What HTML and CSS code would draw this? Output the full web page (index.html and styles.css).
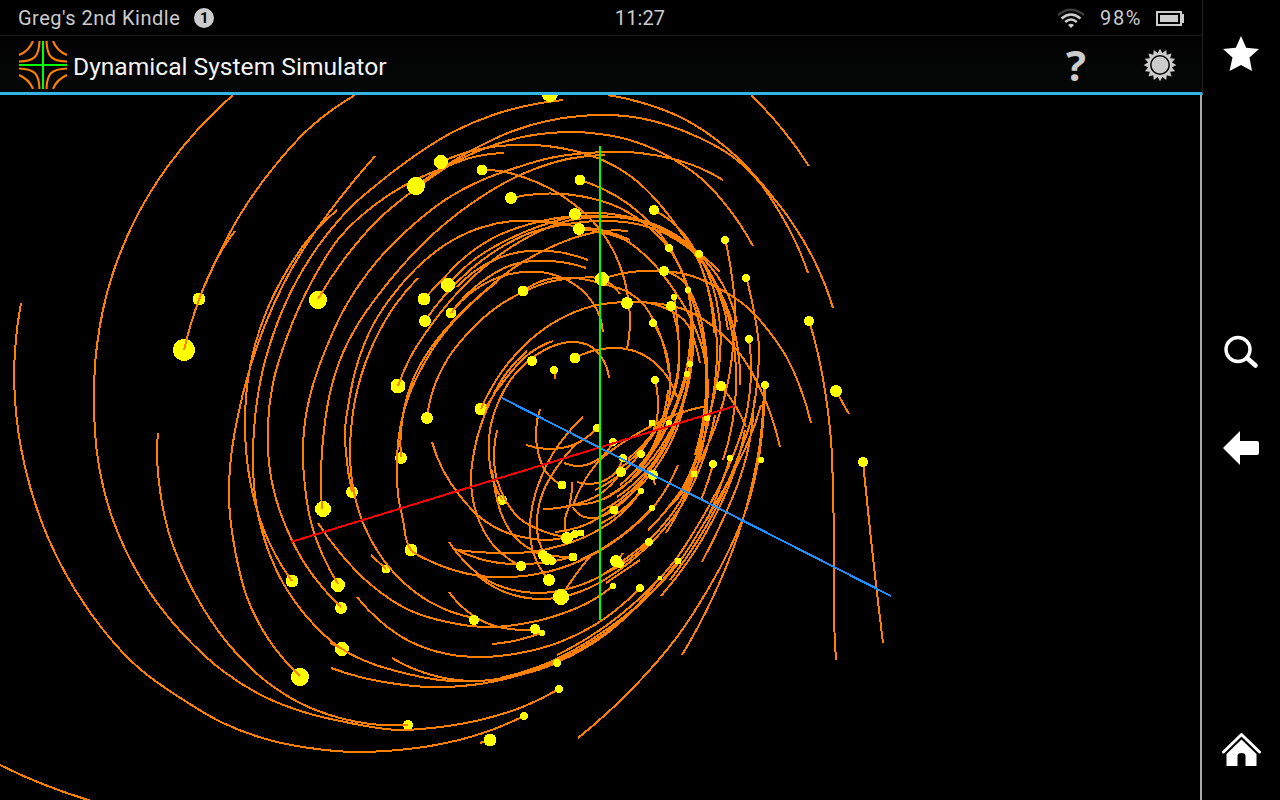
FILE: index.html
```html
<!DOCTYPE html>
<html lang="en">
<head>
<meta charset="utf-8">
<title>Dynamical System Simulator</title>
<link rel="stylesheet" href="styles.css">
</head>
<body>
<div class="device">
  <main class="screen">
    <div class="status">
      <div class="status-left"><span class="device-name">Greg's 2nd Kindle</span><span class="badge">1</span></div>
      <div class="clock">11:27</div>
      <div class="status-right">
        <svg class="wifi" width="28" height="21" viewBox="0 0 28 21" fill="none" stroke-width="2.6">
          <path d="M1 7Q14-3.500 27 7" stroke="#3c3c3c"/>
          <path d="M4.500 10.500Q14 2.500 23.500 10.500M8.200 14Q14 9 19.800 14" stroke="#ccc"/>
          <path d="M11 17Q14 14.300 17 17L14 20Z" fill="#ccc"/>
        </svg>
        <span class="percent">98%</span>
        <svg class="battery" width="28" height="15" viewBox="0 0 28 15"><path d="M1 1H25V14H1Z" fill="none" stroke="#ccc" stroke-width="2"/><path d="M4 4H22V11H4ZM26 3H28V12H26Z" fill="#ccc"/></svg>
      </div>
    </div>
    <header class="bar">
      <svg class="logo" width="48" height="48" viewBox="0 0 48 48" fill="none">
        <g stroke="#ff8000" stroke-width="2.100">
          <path d="M14 0Q10 10 0 14M20.500 0C20 15 16 20 0 20.500"/>
          <path d="M34 0Q38 10 48 14M27.500 0C28 15 32 20 48 20.500"/>
          <path d="M14 48Q10 38 0 34M20.500 48C20 33 16 28 0 27.500"/>
          <path d="M34 48Q38 38 48 34M27.500 48C28 33 32 28 48 27.500"/>
        </g>
        <path d="M24 0V48M0 24H48" stroke="#0f0" stroke-width="2"/>
      </svg>
      <h1 class="title">Dynamical System Simulator</h1>
      <span class="help">?</span>
      <svg class="gear" width="34" height="34" viewBox="-17 -17 34 34"><path id="teeth" fill="#ccc"/><circle r="9.200" fill="#ccc" stroke="#050505" stroke-width="1.500"/></svg>
    </header>
    <svg class="plot" width="1200" height="705" viewBox="0 95 1200 705">
      <g id="dots-under" class="dots"></g>
      <g id="trails" class="trails"></g>
      <g id="dots" class="dots"></g>
      <g class="axes"><path d="M291 542L735 406" stroke="#f00"/><path d="M502 398L891 596" stroke="#1e90ff"/><path d="M600 146V620" stroke="#0f0"/></g>
    </svg>
  </main>
  <nav class="side">
    <svg class="star" width="38" height="38" viewBox="0 0 38 38"><path d="M19 1L24.200 12.800L37 14L27.500 22.500L30 36L19 30L7.500 36L10.500 22.500L1 14L13.800 12.800Z" fill="#fff"/></svg>
    <svg class="search" width="36" height="34" viewBox="0 0 36 34" fill="none" stroke="#fff"><circle cx="15" cy="14.500" r="12" stroke-width="3.400"/><path d="M24 23L32.500 30.500" stroke-width="4.600" stroke-linecap="round"/></svg>
    <svg class="back" width="38" height="36" viewBox="0 0 38 36"><path d="M1 18L18 1V11H35Q37 11 37 13V23Q37 25 35 25H18V35Z" fill="#fff"/></svg>
    <svg class="home" width="40" height="36" viewBox="0 0 40 36"><path d="M2.500 20L20.500 2.500L38.500 20" fill="none" stroke="#fff" stroke-width="3" stroke-linecap="round" stroke-linejoin="round"/><path d="M20.500 7.500L35.500 22V34H24.500V24Q24.500 21 20.500 21Q16.500 21 16.500 24V34H5.500V22Z" fill="#fff"/></svg>
  </nav>
</div>
<script src="plot.js"></script>
</body>
</html>
```
FILE: styles.css
```css
* { box-sizing: border-box; }
body { margin: 0; background: #000; font-family: Roboto, "Noto Sans", sans-serif; }
.device { display: flex; width: 1280px; height: 800px; overflow: hidden; background: #000; }
.screen { width: 1202px; height: 800px; display: flex; flex-direction: column; }
.status { width: 1203px; height: 36px; display: grid; grid-template-columns: 1fr auto 1fr; align-items: center; padding: 1px 18px 0; border-bottom: 1px solid #191919; border-right: 1px solid #222; color: #ccc; font-size: 20px; line-height: 34px; }
.status-left, .status-right { display: flex; align-items: center; }
.device-name { letter-spacing: .5px; }
.status-right { justify-content: flex-end; }
.badge { width: 20px; height: 20px; margin-left: 14px; border-radius: 50%; background: #ccc; color: #000; font-size: 15px; font-weight: 700; line-height: 20px; text-align: center; }
.clock { position: relative; left: 39px; letter-spacing: .1px; }
.percent { margin: 0 14px 0 15px; letter-spacing: 1.6px; }
.bar { width: 1203px; height: 59px; display: flex; align-items: center; padding: 2px 0 0 19px; background: linear-gradient(#020202, #050707); border-bottom: 3px solid #33b5e5; border-right: 1px solid #222; }
.logo { border-radius: 5px; }
.title { margin: 0 0 0 6px; padding-top: 3px; color: #f3f3f3; font-size: 24.6px; font-weight: 400; line-height: 52px; white-space: nowrap; }
.help { margin-left: auto; margin-right: 57px; color: #ccc; font: 700 42px/54px "Open Sans", sans-serif; }
.gear { margin-right: 25px; }
.plot { display: block; width: 1202px; height: 705px; border-right: 2px solid #aaa; }
.trails path { fill: none; stroke: #ff8000; stroke-width: 2; shape-rendering: crispEdges; }
.dots { fill: #ff0; shape-rendering: crispEdges; }
.axes path { fill: none; stroke-width: 2; shape-rendering: crispEdges; }
.side { width: 78px; display: flex; flex-direction: column; align-items: center; padding: 35px 1px 32px 0; }
.search { margin-top: 262px; }
.back { margin-top: 61px; }
.home { margin-top: auto; }
```
FILE: plot.js
```js
// Each row is one trajectory: x y x y ...
const trails = `
21 303 15 350 15 400 25 467 49 540 85 605 140 669 182 699 223 723 273 741 317 749 353 752 385 751 430 746 480 734 524 716
233 95 200 127 168 166 138 214 112 276 97 345 94 405 98 460 113 520 140 577 182 633 223 671 267 698 307 713 345 722 400 730 440 727 480 720 525 706 559 689
158 433 157 450 160 490 168 530 183 570 203 608 230 646 267 682 300 703 340 718 370 724 408 725
0 765 45 785 95 802
480 743 490 740
355 95 313 125 270 172 240 215 220 252 200 297 184 350
235 231 222 250 208 278 199 299
337 210 310 237 285 274 267 310 253 353 246 397 245 430 247 460 255 503 269 542 292 581
375 156 337 202 308 242 283 285 265 325 250 368 237 420 230 467 229 497 235 550 248 600 269 640 300 676
563 100 530 105 493 115 453 132 413 157 380 182 353 205 325 237 297 280 273 335 260 383 254 430 253 453 256 503 267 547 283 583 307 617 342 649 373 664 400 672 440 680 480 681 520 675 557 663
331 668 360 677 390 683 430 687 480 684 540 668 595 640 640 604 677 562
392 658 425 673 470 681 510 677 560 661 610 631 659 578
330 643 342 649
808 273 796 243 780 213 760 183 733 157 700 138 667 125 633 117 600 115 580 116 547 121 513 131 480 146 447 165 416 186
608 95 643 103 680 117 710 135 738 158 767 190 793 224 815 262 833 308
753 246 729 209 703 180 673 159 636 142 600 134 570 132 533 135 497 144 457 161 418 187 380 218 345 258 318 299
441 162 480 149 512 145 547 146 575 151 600 159 633 178 657 201 680 231 700 264 711 300 717 345 714 390 705 435 690 475 666 510
504 153 470 158 443 168 413 181 376 204 340 237 311 283 287 337 273 383 268 423 268 450 273 487 286 527 307 567 341 607
723 180 700 168 673 159 640 153 587 153 550 158 515 168 480 181 445 200 413 225 378 260 347 304 327 346 311 392 304 430 303 453 305 487 312 526 323 556 338 584
605 155 573 158 540 167 510 180 478 199 447 222 413 254 383 289 358 324 340 360 330 393 324 430 321 470 322 509
630 240 605 231 580 227 546 222 513 221 483 227 453 240 423 262 396 291 373 325 357 365 348 407 345 430 346 453 352 492
418 278 396 304 375 340 358 387 351 430 350 452 353 487 363 523 378 552 401 580 430 602 474 618
318 523 340 553 370 584 409 610 447 622 490 627 527 623 564 613 593 600 613 586
357 597 380 621 411 642 447 654 483 657 520 653 560 642 593 626 616 610 640 588
371 555 386 569
398 386 410 358 432 324 461 289 497 257 530 236 567 221 600 217 633 219 667 231 693 251 713 280 728 330
424 299 440 282 465 257 495 237 530 224 565 217 600 216 640 221 680 240 720 272
448 285 475 259 505 241 540 226 580 215
425 321 445 295 470 270 500 248 530 233 562 225 600 221 637 224 668 235 694 253 714 280 728 315 735 355 736 390 732 425 723 460
451 313 472 292 497 278 523 272 547 273 567 280 584 292 596 308 603 332
586 268 550 261 515 264 480 283 451 313
588 260 550 251 520 252 490 262 457 287
628 231 604 231 580 236 547 249 515 267 486 290 458 316 433 345 415 375 405 405 401 430 401 457
497 282 470 305 445 332 425 362 408 398 399 435 397 470 398 494 403 520 411 550 430 561 450 569 480 576 513 577 547 572 582 560 622 536 655 505 678 465
427 417 433 390 447 360 468 333 497 307 523 292 553 281 577 278 602 279 620 294
523 291 545 280 575 278 607 285 628 292 643 304 655 323 664 347 669 373
602 279 620 274 640 271 664 271 692 276 720 289 747 307 768 330 787 358 800 387 811 423
481 409 503 370 529 341 560 319 593 306 627 302 653 303 683 309 714 327 743 358 763 395 780 447
627 302 660 306 688 325 695 343 700 363
527 351 505 375 487 409 475 447 471 477 473 500 480 523 494 546 521 566
502 500 493 480 489 453 490 430 498 403 512 378 531 359 553 346 573 342 590 346 602 358 609 378
553 341 530 353 507 377 486 407
497 430 494 453 497 480 506 501 519 518 540 530 567 537
492 470 495 490 501 513 513 535 530 549 545 556
575 358 592 351 611 348 631 350 650 359 666 375 677 397
556 370 555 379
432 442 443 470 460 496 481 518 505 532 527 538 547 540 567 537
540 409 536 430 538 452 546 472 562 485
526 445 547 449 573 445 597 428
583 417 567 434 552 455 540 480 533 503 530 527 534 555 549 580
577 443 557 467 543 492 537 520 539 541 547 558
564 463 580 466 600 458 613 442
577 482 597 483 613 475 623 458
543 509 573 505 600 494 621 472
573 505 598 501 623 487 646 460 660 428 668 390
572 482 570 503 565 520 567 537
573 507 580 515 593 518 613 510
555 532 585 525 620 503 650 475 670 444 683 410
457 550 497 553 530 552 563 545 593 533 620 515 641 491
453 548 480 559 510 564 540 563 573 557
545 556 573 557
449 542 465 562 487 580 513 590 540 593 567 589 597 578 624 560 651 538 676 508 694 474
477 575 500 590 527 598 556 598 589 588 622 568 654 540 683 503 703 460 715 415
593 553 577 573 561 597
449 592 467 611 489 624 510 629 533 630
492 644 518 640 541 633
765 387 763 423 758 463 747 507 730 548 707 591 677 637 633 688 578 738
682 655 713 597 738 535 752 485 761 435 764 387
809 320 818 354 826 397 831 440 833 490 834 553 834 620 836 660
863 462 870 530 877 593 883 643
836 391 849 414
751 95 783 130 809 166
482 170 500 171 523 177 549 188 575 205 597 226 613 250 624 278 629 305 630 325 627 349
580 180 603 189 627 203 650 223 670 248 684 278 692 315 693 350 687 390 671 430 647 465 610 495
511 198 537 194 580 196 620 208 652 230 677 261 690 300 690 345 681 390 663 432 637 470
575 214 600 213 637 219 669 231 698 253 723 285 737 322
579 229 600 232 625 240 651 261 674 290 693 323 705 360 705 405 695 455
654 210 672 222 690 242 704 275 714 333
726 243 732 277 735 305 734 335 728 382 717 422 702 457 680 493 648 530
747 280 755 317 759 347 758 373 751 420 737 460 720 500 698 540 670 580
669 248 682 272 693 302 702 335 707 370 706 420
699 254 712 284 720 325 718 375 706 425
695 250 714 280 728 310 738 350 740 385
664 271 682 280 697 307 706 350 706 400 700 445 684 485
749 339 751 370 745 420 727 470 701 520 673 563 640 598 600 630 557 655
761 405 749 440 729 480 706 520 680 561 645 599 600 634 550 662 500 678
745 430 733 475 713 520 689 560 661 596
754 400 750 440 741 475 725 515 702 562
674 297 678 330 678 370 669 405 650 439 618 470
671 306 679 345 675 390 657 427 628 459
653 323 665 348 670 380 665 420 648 455 620 485
688 290 692 325 690 364 681 410 663 451 637 485 600 512
690 364 683 405 666 443 644 474 617 497
687 374 673 415 654 450 630 482
686 390 668 440 645 477 614 510
655 380 658 400 656 423 645 446 624 471 595 490
707 406 680 413 655 424 627 440 600 460 585 480 573 505
707 418 703 445 694 474 682 493 665 511
721 386 735 405 746 427
694 474 682 504 666 533
713 464 709 478 701 500
730 458 722 482 707 520
653 475 655 485
652 508 630 529 605 547 580 560
649 542 627 561 600 576
606 583 640 560
641 491 622 510 600 524
616 562 623 553
`;
// x y radius
const dots = `550 94 8,441 162 7,416 186 9,482 170 5.5,580 180 5.5,511 198 6,575 214 6,579 229 6,654 210 5,602 279 7,523 291 5.5,
448 285 7,424 299 6.5,425 321 6,669 248 4,699 254 4,664 271 5,725 240 4,746 278 4,688 290 3,674 297 3,671 306 5,627 303 6,
653 323 4,749 339 4,809 321 5,532 361 5,575 358 5.5,554 370 4,690 364 3,687 374 3,655 380 4,721 386 5,765 385 4,836 391 6,
863 462 5,427 418 6,597 428 4,652 423 3.5,669 423 3,707 418 3,613 442 4,641 454 4,623 458 4,621 472 5,653 475 5,713 464 4,
730 458 3,761 460 3,694 474 3.5,562 485 4.500,614 510 4.500,641 491 3,652 508 3,567 538 6,575 534 4,581 533 3.5,649 542 4,
543 555 5,547 559 6,552 561 4,573 557 4.500,521 566 5,549 580 6,616 561 6,620 564 4,561 597 8,613 586 3,640 588 4,678 561 3.500,
660 578 2.500,474 620 5,535 629 5,542 633 3,557 663 4,559 689 4,524 716 4,490 740 6.500`;
const dotsUnder = `184 350 11,199 299 6.5,318 300 9,398 386 7.500,451 313 5.5,481 409 6.5,401 458 6,352 492 6,323 509 8,411 550 6.5,
386 569 4.500,292 581 6.5,338 585 7,341 608 6,342 649 7,300 677 9,408 725 5,502 500 5`;

const NS = 'http://www.w3.org/2000/svg';
const add = (id, tag, attrs) => {
  const el = document.createElementNS(NS, tag);
  for (const k in attrs) el.setAttribute(k, attrs[k]);
  document.getElementById(id).appendChild(el);
};

// Smooth curve through the points: each inner tangent is that of the parabola
// through its neighbours, and the end tangents mirror the ones beside them.
function smooth(p) {
  const n = p.length, len = [], dir = [], tan = [];
  for (let i = 0; i < n - 1; i++) {
    const dx = p[i + 1][0] - p[i][0], dy = p[i + 1][1] - p[i][1];
    len[i] = Math.hypot(dx, dy);
    dir[i] = [dx / len[i], dy / len[i]];
  }
  if (n === 2) return `M${p[0]}L${p[1]}`;
  for (let i = 1; i < n - 1; i++) {
    const s = len[i - 1] + len[i];
    tan[i] = [0, 1].map(k => (dir[i - 1][k] * len[i] + dir[i][k] * len[i - 1]) / s);
  }
  tan[0] = [0, 1].map(k => 2 * dir[0][k] - tan[1][k]);
  tan[n - 1] = [0, 1].map(k => 2 * dir[n - 2][k] - tan[n - 2][k]);
  let d = `M${p[0]}`;
  for (let i = 0; i < n - 1; i++) {
    const h = len[i] / 3, b = p[i], c = p[i + 1];
    d += `C${b[0] + tan[i][0] * h} ${b[1] + tan[i][1] * h} ${c[0] - tan[i + 1][0] * h} ${c[1] - tan[i + 1][1] * h} ${c[0]} ${c[1]}`;
  }
  return d;
}
for (const row of trails.trim().split('\n')) {
  const n = row.trim().split(/\s+/).map(Number), p = [];
  for (let i = 0; i < n.length; i += 2) p.push([n[i], n[i + 1]]);
  add('trails', 'path', { d: smooth(p) });
}
for (const [id, list] of [['dots', dots], ['dots-under', dotsUnder]])
  for (const item of list.split(',')) {
    const [cx, cy, r] = item.trim().split(' ');
    add(id, 'circle', { cx, cy, r });
  }

// Toothed outline of the settings icon
let teeth = '';
for (let i = 0; i < 32; i++) {
  const r = i % 2 ? 12.2 : 16.3, a = i * Math.PI / 16;
  teeth += `${i ? 'L' : 'M'}${r * Math.sin(a)} ${-r * Math.cos(a)}`;
}
document.getElementById('teeth').setAttribute('d', teeth + 'Z');
```
